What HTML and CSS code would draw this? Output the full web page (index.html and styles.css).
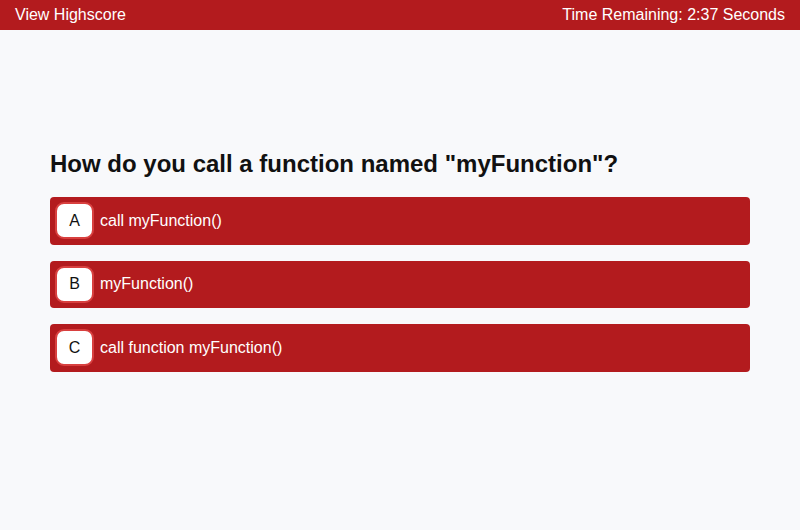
FILE: index.html
```html
<!DOCTYPE html>
<html>
<head>
<meta charset="utf-8">
<link rel="stylesheet" href="styles.css">
</head>
<body>
<header class="topbar">
  <a class="highscore">View Highscore</a>
  <span class="timer">Time Remaining: 2:37 Seconds</span>
</header>
<main class="quiz">
  <h1 class="question">How do you call a function named "myFunction"?</h1>
  <div class="answers">
    <button class="answer"><span class="letter">A</span><span class="label">call myFunction()</span></button>
    <button class="answer"><span class="letter">B</span><span class="label">myFunction()</span></button>
    <button class="answer"><span class="letter">C</span><span class="label">call function myFunction()</span></button>
  </div>
</main>
</body>
</html>
```
FILE: styles.css
```css
* { box-sizing: border-box; }
html, body { margin: 0; padding: 0; }
body {
  background: #f8f9fb;
  font-family: "Liberation Sans", Arial, sans-serif;
  height: 530px;
}
.topbar {
  height: 30px;
  background: #b31b1e;
  color: #fff;
  display: flex;
  justify-content: space-between;
  align-items: center;
  padding: 0 15px 1px 15px;
  font-size: 16px;
}
.quiz {
  padding: 120px 50px 0 50px;
}
.question {
  margin: 0 0 19px 0;
  font-size: 24px;
  font-weight: bold;
  color: #111;
  line-height: 28px;
}
.answers {
  display: flex;
  flex-direction: column;
  gap: 16px;
}
.answer {
  display: flex;
  align-items: center;
  width: 700px;
  height: 47.5px;
  padding: 0 5px;
  background: #b31b1e;
  border: none;
  border-radius: 4px;
  color: #fff;
  font-family: inherit;
  font-size: 16px;
  text-align: left;
  gap: 6px;
}
.letter {
  width: 39px;
  height: 37px;
  background: #fff;
  border: 2px solid #d8403f;
  border-radius: 9px;
  color: #111;
  display: flex;
  align-items: center;
  justify-content: center;
  font-size: 16px;
  flex: none;
}
```
